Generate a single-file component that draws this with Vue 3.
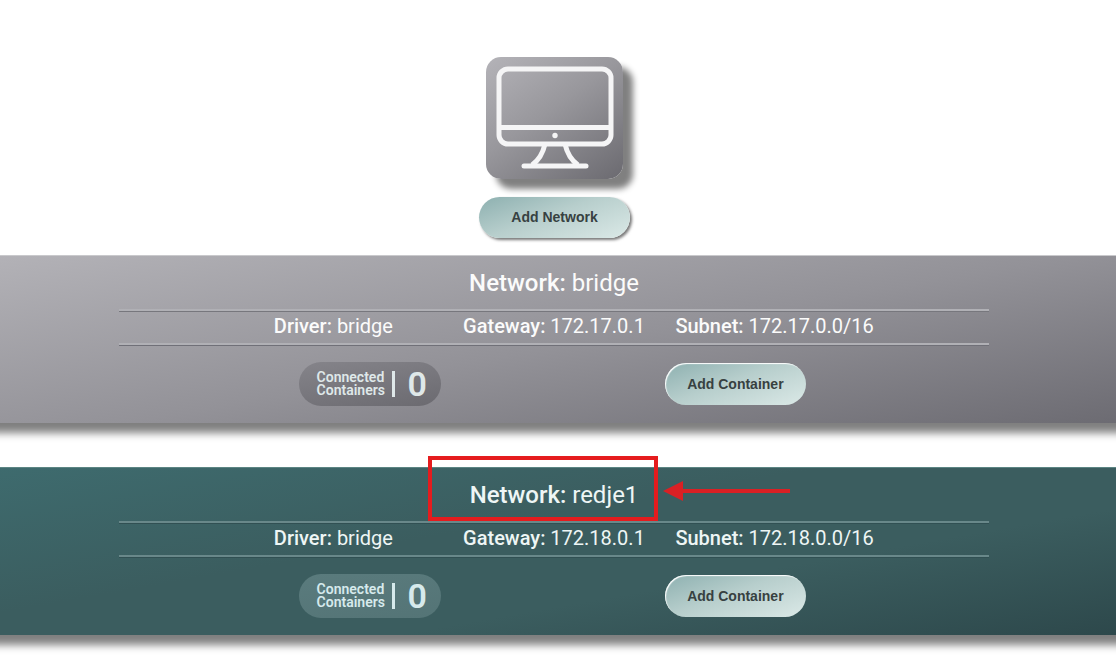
<script setup>
const networks = [
  { name: 'bridge', gateway: '172.17.0.1', subnet: '172.17.0.0/16', containers: 0, theme: 'grey', marked: false },
  { name: 'redje1', gateway: '172.18.0.1', subnet: '172.18.0.0/16', containers: 0, theme: 'teal', marked: true },
]
</script>

<template>
  <main class="page">
    <header class="top">
      <div class="host">
        <svg class="monitor" viewBox="0 0 137 122" aria-hidden="true">
          <rect x="13" y="12" width="112" height="75" rx="9" />
          <path d="M13 70.500H125" />
          <path d="M59 87C57 96 53 103 46 108M79 87C81 96 85 103 92 108" />
          <path d="M38 109H100" stroke-linecap="round" />
          <circle cx="69" cy="78.500" r="2.700" />
        </svg>
      </div>
      <button type="button" class="btn add-network">Add Network</button>
    </header>

    <section v-for="net in networks" :key="net.name" class="band" :class="net.theme">
      <div class="inner">
        <h2 class="title"><b>Network:</b> {{ net.name }}</h2>
        <div class="facts-frame">
          <div class="facts">
            <span><b>Driver:</b> bridge</span>
            <span><b>Gateway:</b> {{ net.gateway }}</span>
            <span><b>Subnet:</b> {{ net.subnet }}</span>
          </div>
        </div>
        <div class="actions">
          <div class="counter">
            <span class="label">Connected Containers</span>
            <span class="bar"></span>
            <span class="count">{{ net.containers }}</span>
          </div>
          <button type="button" class="btn add-container">Add Container</button>
        </div>
      </div>
      <svg v-if="net.marked" class="mark" width="364" height="66" viewBox="0 0 364 66" aria-hidden="true">
        <rect x="2" y="2" width="226" height="61" fill="none" stroke="#e51c1e" stroke-width="4" />
        <path d="M252 35H362" stroke="#da2024" stroke-width="4" />
        <path d="M235 35L255 25V45Z" fill="#da2024" />
      </svg>
    </section>
  </main>
</template>

<style>
body {
  margin: 0;
  background: #fff;
}
</style>

<style scoped>
.page {
  font-family: Roboto, "Liberation Sans", sans-serif;
  overflow: hidden;
  padding-bottom: 22px;
}
.top {
  display: flex;
  flex-direction: column;
  align-items: center;
  gap: 18px;
  padding: 57px 7px 17px 0;
}
.host {
  width: 137px;
  height: 122px;
  border-radius: 15px;
  background: linear-gradient(145deg, #b4b3b8, #98979c 45%, #6b6a70);
  box-shadow: 10px 10px 6px #808080;
}
.monitor {
  display: block;
  fill: none;
  stroke: #f5f5f6;
  stroke-width: 5;
}
.monitor circle {
  fill: #f5f5f6;
  stroke: none;
}
.btn {
  box-sizing: border-box;
  border: 0;
  border-radius: 21px;
  background: linear-gradient(160deg, #8db0b0, #b7cecc 45%, #dbe9e7);
  color: #374141;
  font: bold 14px "Liberation Sans", Arial, sans-serif;
  padding: 0;
}
.add-network {
  width: 151px;
  height: 41px;
  padding-bottom: 2px;
  box-shadow: 2px 2px 3px #777;
}
.add-container {
  width: 141px;
  height: 42px;
  box-shadow: inset 1px 1px 1px #fff;
}
.band {
  position: relative;
  box-sizing: border-box;
  height: 168px;
  margin: 0 -10px;
  padding: 0 18px 0 10px;
  color: #fbfbfb;
  box-shadow: 0 10px 8px #808080;
}
.band + .band {
  margin-top: 44px;
}
.grey {
  background: linear-gradient(170deg, #b3b2b7, #939298 52%, #6c6b72);
  border-top: 1px solid #c9c9cc;
}
.teal {
  background: linear-gradient(170deg, #3e6b6e, #3b5d5f 40%, #3b5d5f 65%, #2d484b);
  border-top: 1px solid #5c8583;
  color: #eef6f5;
}
.inner {
  width: 78.6%;
  margin: 0 auto;
}
.title {
  margin: 0;
  height: 53px;
  line-height: 54px;
  text-align: center;
  font-size: 24px;
  font-weight: 400;
}
b {
  font-weight: 500;
}
.facts-frame {
  border-top: 2px solid #b0b0b5;
  border-bottom: 2px solid #b0b0b5;
  box-shadow: 0 1px 0 #707078, inset 0 1px 0 #77777d;
}
.teal .facts-frame {
  border-color: #69888a;
  box-shadow: 0 1px 0 #315053, inset 0 1px 0 #315053;
}
.facts {
  display: grid;
  grid-template-columns: repeat(3, 1fr);
  width: 76%;
  margin: 0 auto;
  height: 32px;
  line-height: 31px;
  text-align: center;
  font-size: 20px;
  white-space: nowrap;
}
.actions {
  display: grid;
  grid-template-columns: 1fr 1fr;
  align-items: center;
  justify-items: center;
  width: 84%;
  margin: 17px auto 0;
  padding-right: 3px;
}
.counter {
  box-sizing: border-box;
  display: flex;
  align-items: center;
  width: 142px;
  height: 44px;
  padding-left: 18px;
  border-radius: 22px;
  background: linear-gradient(170deg, #85848a, #6b6a70);
  color: #dfe8e9;
  font-weight: 600;
}
.teal .counter {
  background: linear-gradient(170deg, #5a7b7d, #547476);
  color: #d6eaec;
}
.label {
  width: 71px;
  font-size: 14px;
  line-height: 13px;
}
.bar {
  width: 3px;
  height: 26px;
  margin-left: 4px;
  background: currentColor;
}
.count {
  margin-left: 13px;
  font-size: 34px;
  line-height: 42px;
}
.mark {
  position: absolute;
  top: -12px;
  left: calc(50% - 130px);
}
</style>
